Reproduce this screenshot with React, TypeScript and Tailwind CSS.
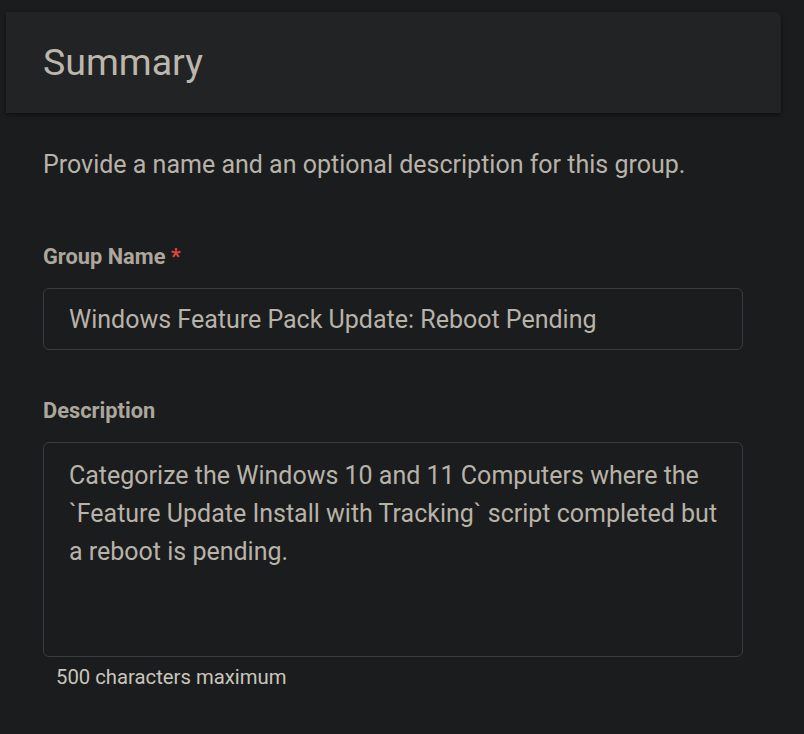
export default function App() {
  return (
    <div
      className="min-h-screen w-full bg-[#1b1c1e] pt-[12px] pl-[6px] pr-[23px]"
      style={{ fontFamily: 'Roboto, "Liberation Sans", sans-serif' }}
    >
      {/* Header card */}
      <div className="h-[101px] rounded-tr-md bg-[#222325] shadow-[0_2px_4px_rgba(0,0,0,0.45)] flex items-center pl-[37px]">
        <h2 className="text-[37.5px] leading-none text-[#bcb7ad]">Summary</h2>
      </div>

      {/* Form body */}
      <div className="pl-[37px] pr-[38px]">
        <p className="mt-[37px] text-[25px] leading-[30px] text-[#b8b3a9]">
          Provide a name and an optional description for this group.
        </p>

        <label className="mt-[65px] block text-[21.8px] leading-[24px] font-bold text-[#aca79d]">
          Group Name <span className="text-[#e0443e]">*</span>
        </label>
        <div className="mt-[19px] h-[62px] rounded-md border border-[#3b3c3f] flex items-center pl-[25px]">
          <span className="text-[25px] text-[#b8b3a9] mt-[1px]">Windows Feature Pack Update: Reboot Pending</span>
        </div>

        <label className="mt-[49px] block text-[21.8px] leading-[24px] font-bold text-[#aca79d]">
          Description
        </label>
        <div className="mt-[19px] h-[215px] rounded-md border border-[#3b3c3f] pl-[25px] pr-[20px] pt-[14px]">
          <p className="text-[25px] leading-[38px] text-[#b8b3a9]">
            Categorize the Windows 10 and 11 Computers where the `Feature Update Install with Tracking` script
            completed but a reboot is pending.
          </p>
        </div>
        <p className="mt-[8px] pl-[13px] text-[20.3px] leading-[24px] text-[#c9c5bc]">500 characters maximum</p>
      </div>
    </div>
  );
}
